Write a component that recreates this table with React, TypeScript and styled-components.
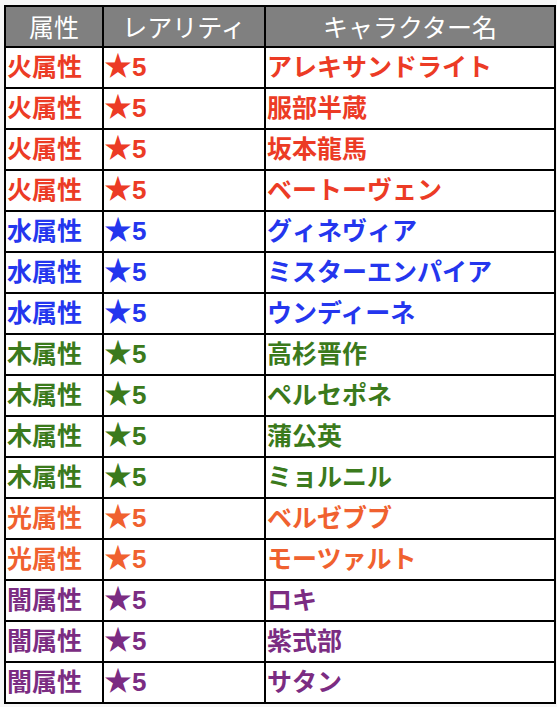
import React from "react";
import styled, { createGlobalStyle } from "styled-components";

const Global = createGlobalStyle`
  html, body { margin: 0; padding: 0; background: #f6f6f6; }
  body { font-family: "Noto Sans CJK JP", "Noto Sans", sans-serif; }
`;

const Wrap = styled.div`
  padding: 5px 0 0 4px;
`;

const Table = styled.table`
  border-collapse: collapse;
  width: 546px;
  table-layout: fixed;
  background: #fff;
  border: 2px solid #000;
`;

const Th = styled.th<{ $w: number }>`
  width: ${(p) => p.$w}px;
  height: 39px;
  background: #808080;
  color: #fff;
  font-weight: 400;
  font-size: 25px;
  text-align: center;
  border: 2px solid #000;
  padding: 0;
  line-height: 1;
`;

const Td = styled.td<{ $c: string }>`
  height: 39px;
  color: ${(p) => p.$c};
  font-family: "Liberation Sans", "Noto Sans CJK JP", sans-serif;
  font-weight: 700;
  font-size: 25px;
  text-align: left;
  border: 2px solid #000;
  padding: 0 0 0 1px;
  line-height: 1;
  white-space: nowrap;
`;

const Star = styled.span`
  font-family: "Noto Sans CJK JP", sans-serif;
  font-size: 28px;
  line-height: 0;
  margin-left: -1px;
`;

const Digit = styled.span`
  font-size: 26px;
  line-height: 0;
`;

const colors: Record<string, string> = {
  火: "#ec3b25",
  水: "#2436ee",
  木: "#3b7a1c",
  光: "#f0612f",
  闇: "#7b2c82",
};

const rows: [string, string][] = [
  ["火", "アレキサンドライト"],
  ["火", "服部半蔵"],
  ["火", "坂本龍馬"],
  ["火", "ベートーヴェン"],
  ["水", "グィネヴィア"],
  ["水", "ミスターエンパイア"],
  ["水", "ウンディーネ"],
  ["木", "高杉晋作"],
  ["木", "ペルセポネ"],
  ["木", "蒲公英"],
  ["木", "ミョルニル"],
  ["光", "ベルゼブブ"],
  ["光", "モーツァルト"],
  ["闇", "ロキ"],
  ["闇", "紫式部"],
  ["闇", "サタン"],
];

export default function App() {
  return (
    <Wrap>
      <Global />
      <Table>
        <thead>
          <tr>
            <Th $w={96}>属性</Th>
            <Th $w={160}>レアリティ</Th>
            <Th $w={288}>キャラクター名</Th>
          </tr>
        </thead>
        <tbody>
          {rows.map(([el, name], i) => (
            <tr key={i}>
              <Td $c={colors[el]}>{el}属性</Td>
              <Td $c={colors[el]}>
                <Star>★</Star>
                <Digit>5</Digit>
              </Td>
              <Td $c={colors[el]}>{name}</Td>
            </tr>
          ))}
        </tbody>
      </Table>
    </Wrap>
  );
}
